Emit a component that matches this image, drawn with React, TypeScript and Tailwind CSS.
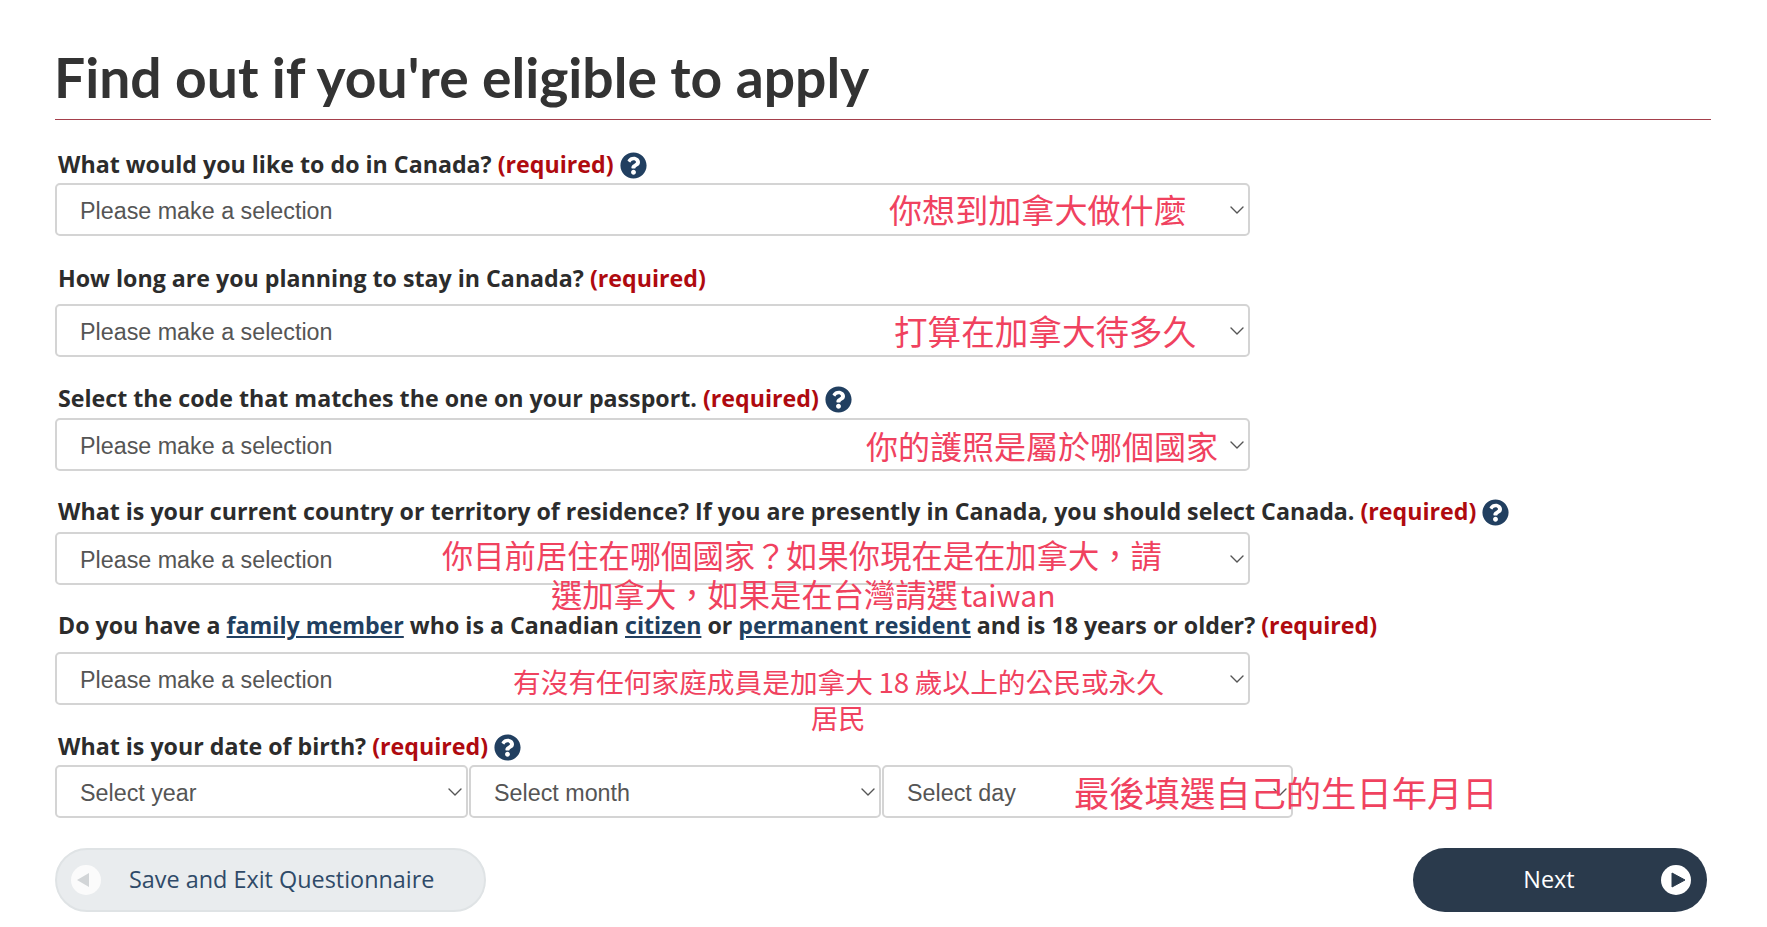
import type { ReactNode } from "react"
import { ChevronDown } from "lucide-react"
import { FaQuestionCircle } from "react-icons/fa"

function Required() {
  return <span className="text-[#af0a0f]"> (required)</span>
}

function Help() {
  return <FaQuestionCircle className="ml-[6px] inline-block size-[27px] align-[-6px] text-[#213f60]" />
}

function Select({ text, className }: { text: string; className: string }) {
  return (
    <div className={`relative h-[53px] rounded-[5px] border-2 border-[#d4d4d4] bg-white pl-[23px] font-['Liberation_Sans',sans-serif] text-[23.3px] leading-[52px] text-[#555555] ${className}`}>
      {text}
      <ChevronDown className="absolute -right-px top-[13px] size-[24px] text-[#555555]" strokeWidth={1.4} />
    </div>
  )
}

function Label({ children, className }: { children: ReactNode; className: string }) {
  return (
    <div className={`ml-[3px] h-[36px] whitespace-nowrap font-['Open_Sans',sans-serif] text-[23.2px] font-bold leading-[36px] text-[#2c2c2c] ${className}`}>
      {children}
    </div>
  )
}

function Note({ children, className }: { children: ReactNode; className: string }) {
  return (
    <div className={`absolute whitespace-nowrap font-['Noto_Sans_CJK_TC',sans-serif] leading-none text-[#f0425f] ${className}`}>
      {children}
    </div>
  )
}

export default function App() {
  return (
    <div className="relative h-[927px] w-[1767px] overflow-hidden bg-white pl-[55px] pr-[56px] pt-[37px]">
      <h1 className="-ml-px h-[82px] font-['Lato',sans-serif] text-[55.2px] font-bold leading-[80px] text-[#333333]">
        Find out if you're eligible to apply
      </h1>
      <div className="h-[1px] bg-[#a5404c]" />

      <Label className="mt-[26px]">What would you like to do in Canada?<Required /><Help /></Label>
      <Select text="Please make a selection" className="mt-[1px] w-[1195px]" />

      <Label className="mt-[24px]">How long are you planning to stay in Canada?<Required /></Label>
      <Select text="Please make a selection" className="mt-[8px] w-[1195px]" />

      <Label className="mt-[23px]">Select the code that matches the one on your passport.<Required /><Help /></Label>
      <Select text="Please make a selection" className="mt-[2px] w-[1195px]" />

      <Label className="mt-[22px]">
        What is your current country or territory of residence? If you are presently in Canada, you should select Canada.<Required /><Help />
      </Label>
      <Select text="Please make a selection" className="mt-[3px] w-[1195px]" />

      <Label className="mt-[22px]">
        Do you have a <a className="text-[#213f60] underline">family member</a> who is a Canadian{" "}
        <a className="text-[#213f60] underline">citizen</a> or <a className="text-[#213f60] underline">permanent resident</a> and is 18 years or older?<Required />
      </Label>
      <Select text="Please make a selection" className="mt-[9px] w-[1195px]" />

      <Label className="mt-[23px]">What is your date of birth?<Required /><Help /></Label>
      <div className="mt-[1px] flex gap-px">
        <Select text="Select year" className="w-[413px]" />
        <Select text="Select month" className="w-[412px]" />
        <Select text="Select day" className="w-[411px]" />
      </div>

      <div className="mt-[30px] flex justify-between pr-[4px]">
        <button className="flex h-[64px] w-[431px] items-center rounded-[32px] border-2 border-[#dfe3e5] bg-[#e9ecee] pl-[14px] font-['Open_Sans',sans-serif] text-[23.4px] text-[#2f4a68]">
          <svg viewBox="0 0 30 30" className="size-[30px]">
            <circle cx="15" cy="15" r="15" fill="#fbfbfb" />
            <path d="M6 15 L18 8 V22 Z" fill="#d2d5d7" />
          </svg>
          <span className="ml-[28px]">Save and Exit Questionnaire</span>
        </button>
        <button className="relative h-[64px] w-[294px] rounded-[32px] bg-[#2a3a4c] pr-[22px] font-['Open_Sans',sans-serif] text-[23.4px] text-white">
          Next
          <svg viewBox="0 0 30 30" className="absolute right-[16px] top-[17px] size-[30px]">
            <circle cx="15" cy="15" r="15" fill="#ffffff" />
            <path d="M11 8 L24 15 L11 22 Z" fill="#2a3a4c" stroke="#2a3a4c" strokeLinejoin="round" />
          </svg>
        </button>
      </div>

      <Note className="left-[889px] top-[193px] text-[33.1px]">你想到加拿大做什麼</Note>
      <Note className="left-[894px] top-[314px] text-[33.6px]">打算在加拿大待多久</Note>
      <Note className="left-[866px] top-[429px] text-[32px]">你的護照是屬於哪個國家</Note>
      <Note className="left-[442px] top-[539px] text-[31.3px]">{"你目前居住在哪個國家\uFF1F如果你現在是在加拿大\uFF0C請"}</Note>
      <Note className="left-[551px] top-[578px] text-[31.3px]">
        {"選加拿大\uFF0C如果是在台灣請選"}
        <span className="ml-[3px] text-[30px]">taiwan</span>
      </Note>
      <Note className="left-[513px] top-[668px] text-[27.7px]">{"有沒有任何家庭成員是加拿大\u200918\u2009歲以上的公民或永久"}</Note>
      <Note className="left-[811px] top-[704px] text-[27.2px]">居民</Note>
      <Note className="left-[1074px] top-[774px] text-[35.3px]">最後填選自己的生日年月日</Note>
    </div>
  )
}
